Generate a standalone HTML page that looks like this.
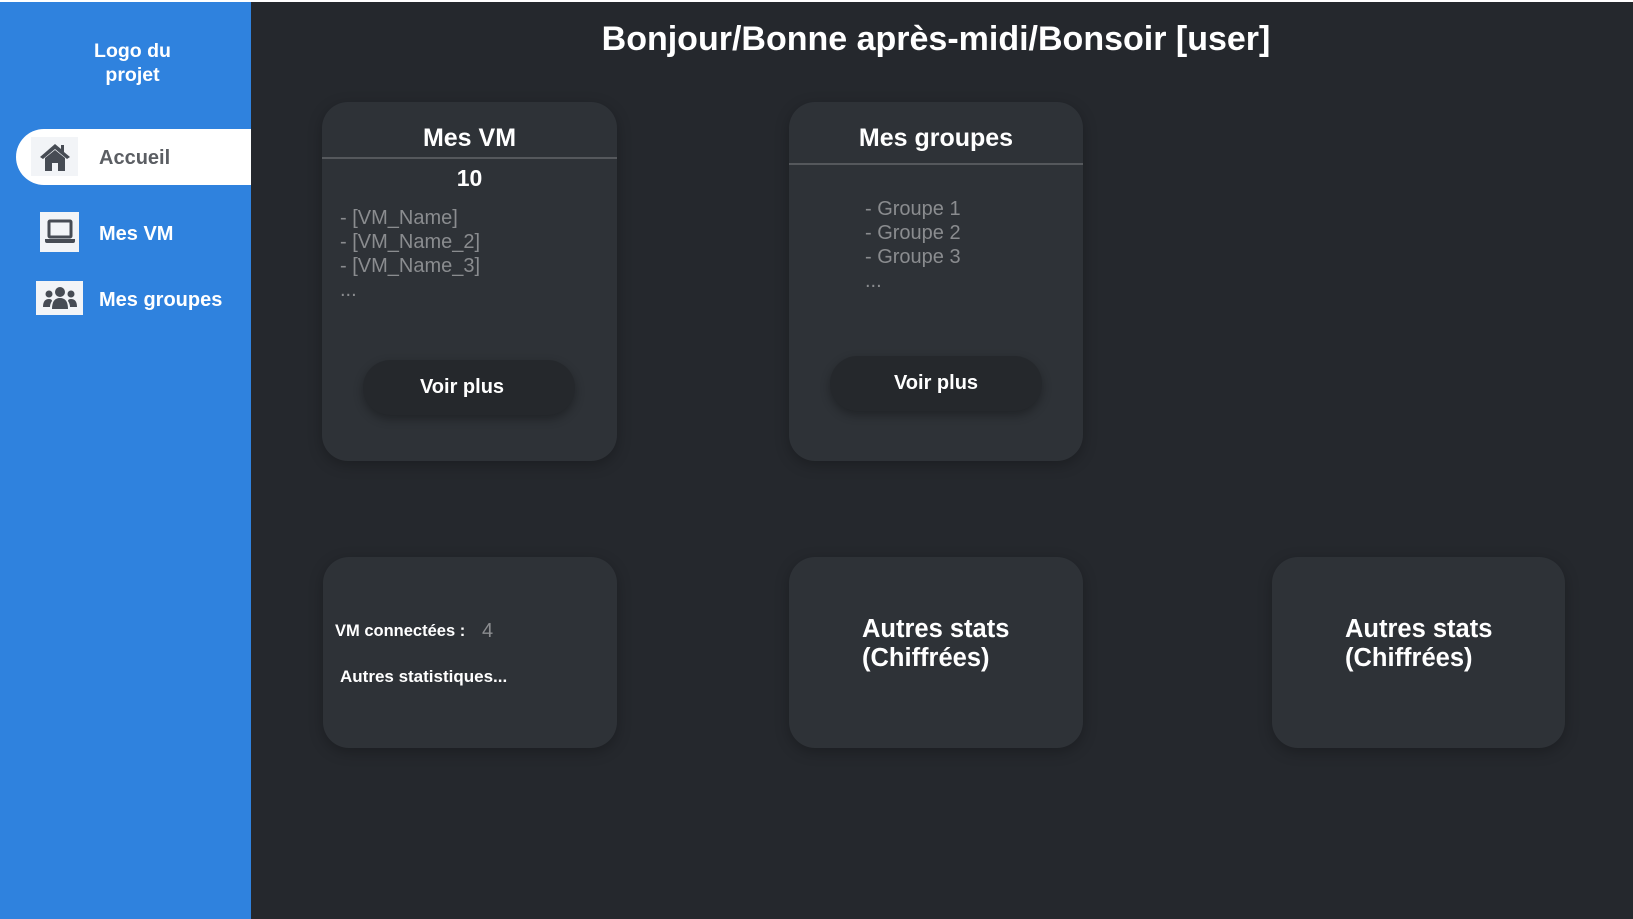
<!DOCTYPE html>
<html><head><meta charset="utf-8"><style>
*{margin:0;padding:0;box-sizing:border-box}
body{width:1633px;height:919px;overflow:hidden;background:#25282d;font-family:"Liberation Sans",Arial,sans-serif;position:relative}
.top{position:absolute;left:0;top:0;width:1633px;height:2px;background:#fff}
.side{position:absolute;left:0;top:2px;width:251px;height:917px;background:#2f82de}
.logo{position:absolute;left:0;width:265px;top:37px;text-align:center;color:#fff;font-weight:bold;font-size:19.5px;line-height:24px}
.pill{position:absolute;left:16px;top:127px;width:235px;height:56px;background:#fff;border-radius:28px 0 0 28px}
.ibox{position:absolute;background:#f2f4f7;display:flex;align-items:center;justify-content:center}
.nav{position:absolute;left:99px;font-weight:bold;font-size:20px;color:#fff}
.ab{position:absolute}
.card{position:absolute;background:#2e3237;border-radius:26px;box-shadow:0 4px 14px rgba(0,0,0,.25)}
.c{color:#fff;font-weight:bold;position:absolute;white-space:nowrap}
.list{position:absolute;color:#8a8c8f;font-size:20px;line-height:24px}
.btn{position:absolute;background:#25282c;border-radius:28px;box-shadow:0 4px 10px rgba(0,0,0,.3);color:#fff;font-weight:bold;font-size:20px;display:flex;align-items:center;justify-content:center}
.hr{position:absolute;height:2px;background:#55585c}
</style></head><body>
<div class="top"></div>
<div class="side">
<div class="logo">Logo du<br>projet</div>
<div class="pill"></div>
<div class="ibox" style="left:31px;top:135px;width:47px;height:39px">
<svg width="34" height="30" viewBox="0 0 34 30"><path d="M17 2 L2 15 L5 17 L17 7 L29 17 L32 15 L26 10 V3 H23 V7 Z" fill="#474c54"/><path d="M7 16 L17 8 L27 16 V29 H20 V21 H14 V29 H7 Z" fill="#474c54"/></svg></div>
<div class="nav" style="top:145px;color:#5b5e63">Accueil</div>
<div class="ibox" style="left:40px;top:210px;width:39px;height:40px">
<svg width="32" height="26" viewBox="0 0 32 26"><rect x="5" y="2" width="22" height="16" rx="1" fill="none" stroke="#474c54" stroke-width="3"/><path d="M1 20 H31 V22 Q31 24 29 24 H3 Q1 24 1 22 Z" fill="#474c54"/></svg></div>
<div class="nav" style="top:221px">Mes VM</div>
<div class="ibox" style="left:36px;top:279px;width:47px;height:34px">
<svg width="36" height="26" viewBox="0 0 36 26"><circle cx="18" cy="7" r="5" fill="#474c54"/><circle cx="7" cy="9" r="3.5" fill="#474c54"/><circle cx="29" cy="9" r="3.5" fill="#474c54"/><path d="M10 24 Q10 13 18 13 Q26 13 26 24 Z" fill="#474c54"/><path d="M1 22 Q1 14 7 14 Q10 14 10 16 Q8 19 8 22 Z" fill="#474c54"/><path d="M35 22 Q35 14 29 14 Q26 14 26 16 Q28 19 28 22 Z" fill="#474c54"/></svg></div>
<div class="nav" style="top:287px">Mes groupes</div>
</div>
<div class="c" style="left:245px;width:1382px;text-align:center;top:20px;font-size:34px">Bonjour/Bonne après-midi/Bonsoir [user]</div>

<div class="card" style="left:322px;top:102px;width:295px;height:359px">
<div class="c" style="left:0;width:295px;text-align:center;top:22px;font-size:25px">Mes VM</div>
<div class="hr" style="left:0;width:295px;top:55px"></div>
<div class="c" style="left:0;width:295px;text-align:center;top:63px;font-size:23px">10</div>
<div class="list" style="left:18px;top:104px">- [VM_Name]<br>- [VM_Name_2]<br>- [VM_Name_3]<br>...</div>
<div class="btn" style="left:41px;top:258px;width:212px;height:55px;padding-right:14px">Voir plus</div>
</div>

<div class="card" style="left:789px;top:102px;width:294px;height:359px">
<div class="c" style="left:0;width:294px;text-align:center;top:22px;font-size:25px">Mes groupes</div>
<div class="hr" style="left:0;width:294px;top:61px"></div>
<div class="list" style="left:76px;top:95px">- Groupe 1<br>- Groupe 2<br>- Groupe 3<br>...</div>
<div class="btn" style="left:41px;top:254px;width:212px;height:55px">Voir plus</div>
</div>

<div class="card" style="left:323px;top:557px;width:294px;height:191px">
<div class="c" style="left:12px;top:65px;font-size:16.5px">VM connectées :</div>
<div class="ab" style="left:159px;top:63px;font-size:20px;color:#8a8c8f">4</div>
<div class="c" style="left:17px;top:110px;font-size:17px">Autres statistiques...</div>
</div>
<div class="card" style="left:789px;top:557px;width:294px;height:191px">
<div class="c" style="left:73px;top:58px;font-size:25.5px;line-height:29px">Autres stats<br>(Chiffrées)</div>
</div>
<div class="card" style="left:1272px;top:557px;width:293px;height:191px">
<div class="c" style="left:73px;top:58px;font-size:25.5px;line-height:29px">Autres stats<br>(Chiffrées)</div>
</div>
</body></html>
